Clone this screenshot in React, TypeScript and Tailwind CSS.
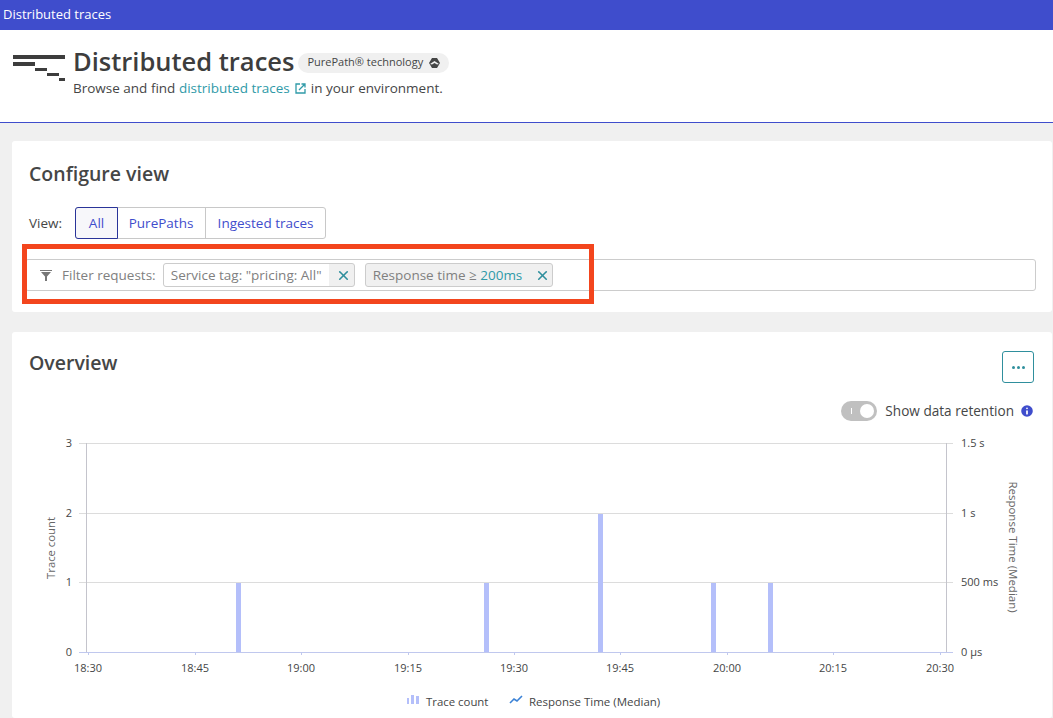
import React from 'react';
import { Info, X } from 'lucide-react';

const font = { fontFamily: '"Open Sans", "Noto Sans", sans-serif' };

const xTicks = [
  { x: 88, label: '18:30' },
  { x: 195, label: '18:45' },
  { x: 301, label: '19:00' },
  { x: 408, label: '19:15' },
  { x: 514, label: '19:30' },
  { x: 620, label: '19:45' },
  { x: 727, label: '20:00' },
  { x: 833, label: '20:15' },
  { x: 940, label: '20:30' },
];

const bars = [
  { x: 236, y: 582 },
  { x: 484, y: 582 },
  { x: 598, y: 513 },
  { x: 711, y: 582 },
  { x: 768, y: 582 },
];

const TraceIcon = () => (
  <svg width="52" height="28" viewBox="0 0 52 28" className="mt-[9px] shrink-0">
    <rect x="0" y="0" width="52" height="4" fill="#3d3d3d" />
    <rect x="0" y="7" width="22" height="4" fill="#3d3d3d" />
    <rect x="22" y="13" width="12" height="3" fill="#3d3d3d" />
    <rect x="34" y="18" width="12" height="3" fill="#3d3d3d" />
    <rect x="46" y="23" width="6" height="3" fill="#3d3d3d" />
  </svg>
);

const Funnel = () => (
  <svg width="12" height="11" viewBox="0 0 12 11">
    <path d="M0 0H12V1H0Z M1 2H11L7 6.5V11H5V6.5Z" fill="#777" />
  </svg>
);

const LinkOut = () => (
  <svg width="11" height="11" viewBox="0 0 11 11" className="mx-[5px]" fill="none" stroke="#2f9aa8">
    <path d="M5 1H1V10H10V6" strokeWidth="1.3" />
    <path d="M4 7L9.5 1.5M6.5 1H10V4.5" strokeWidth="1.3" />
  </svg>
);

const BadgeLogo = () => (
  <svg width="11" height="10" viewBox="0 0 11 10">
    <path d="M3 0H8L11 5L8 10H3L0 5Z" fill="#454646" />
    <path d="M1 6L5.5 3L10 6L8 6.5L5.5 5L3 6.5Z" fill="#f0f0f0" />
  </svg>
);

const Chart = () => (
  <svg width="1041" height="297" viewBox="12 421 1041 297" className="block" fontSize="11" fill="#454646">
    {[443, 513, 582].map((y) => (
      <line key={y} x1="79" x2="953" y1={y + 0.5} y2={y + 0.5} stroke="#dcdcdc" />
    ))}
    <line x1="86.5" x2="86.5" y1="443" y2="652" stroke="#c4c4cc" />
    <line x1="946.5" x2="946.5" y1="443" y2="652" stroke="#c4c4cc" />
    <line x1="79" x2="953" y1="652.5" y2="652.5" stroke="#c0c8ee" />
    {bars.map((b) => (
      <rect key={b.x} x={b.x} y={b.y + 1} width="5" height={652 - b.y - 1} fill="#b4bffa" />
    ))}
    {xTicks.map((t) => (
      <g key={t.label}>
        <line x1={t.x + 0.5} x2={t.x + 0.5} y1="652" y2="655" stroke="#c0c8ee" />
        <text x={t.x} y="672" textAnchor="middle">{t.label}</text>
      </g>
    ))}
    {[
      { y: 443, label: '3' },
      { y: 513, label: '2' },
      { y: 582, label: '1' },
      { y: 652, label: '0' },
    ].map((t) => (
      <text key={t.label} x="72" y={t.y + 4} textAnchor="end">{t.label}</text>
    ))}
    {[
      { y: 443, label: '1.5 s' },
      { y: 513, label: '1 s' },
      { y: 582, label: '500 ms' },
      { y: 652, label: '0 µs' },
    ].map((t) => (
      <text key={t.label} x="961" y={t.y + 4}>{t.label}</text>
    ))}
    <text transform="translate(55 548) rotate(-90)" textAnchor="middle" fill="#666" fontSize="11.3">Trace count</text>
    <text transform="translate(1009 547) rotate(90)" textAnchor="middle" fill="#666" fontSize="11.5">Response Time (Median)</text>
    <rect x="407" y="698" width="2" height="6" fill="#b4bffa" />
    <rect x="411" y="695" width="3" height="9" fill="#b4bffa" />
    <rect x="416" y="696" width="3" height="8" fill="#b4bffa" />
    <text x="426" y="706" fontSize="11.4">Trace count</text>
    <path d="M510 703L514 699L517 701L522 696" fill="none" stroke="#3b82d6" strokeWidth="1.6" />
    <text x="529" y="706" fontSize="11.5">Response Time (Median)</text>
  </svg>
);

export default function App() {
  return (
    <div className="relative h-[718px] w-[1053px] overflow-hidden bg-[#f0f0f0] text-[#454646]" style={font}>
      <div className="flex h-[30px] items-center bg-[#3f4dcc] px-[3px] text-[13px] font-medium text-white">
        Distributed traces
      </div>

      <div className="flex h-[93px] gap-2 border-b border-[#3f4dcc] bg-white pl-[13px] pt-[16px]">
        <TraceIcon />
        <div>
          <div className="flex items-center gap-[4px]">
            <h1 className="text-[25.5px] font-semibold leading-[30px] text-[#3d3d3d]">Distributed traces</h1>
            <span className="mt-[3px] flex h-[20px] items-center gap-[6px] rounded-full bg-[#f0f0f0] px-[9px] text-[11px]">
              PurePath® technology
              <BadgeLogo />
            </span>
          </div>
          <p className="mt-[3px] flex items-center text-[13.5px] leading-[18px]">
            Browse and find&nbsp;
            <span className="text-[#2f9aa8]">distributed traces</span>
            <LinkOut />
            in your environment.
          </p>
        </div>
      </div>

      <div className="ml-3 mr-px mt-[18px] h-[171px] rounded-[3px] bg-white pl-[13px] pr-[16px]">
        <h2 className="pl-1 pt-[20px] text-[19.5px] font-semibold leading-[26px]">Configure view</h2>
        <div className="mt-5 flex items-center gap-[13px] pl-1 text-[13.5px]">
          <span>View:</span>
          <div className="flex h-[32px] rounded-[3px] border border-[#c8c8c8] text-[#3f4dcc]">
            <span className="-m-px flex w-[43px] items-center justify-center rounded-l-[3px] border border-[#2a3499] bg-[#f7f7fa]">All</span>
            <span className="flex w-[89px] items-center justify-center border-r border-[#c8c8c8]">PurePaths</span>
            <span className="flex w-[119px] items-center justify-center">Ingested traces</span>
          </div>
        </div>
        <div className="mt-5 flex h-[32px] items-center rounded-[3px] border border-[#cccccc] pl-[14px] text-[13.5px] text-[#808080]">
          <Funnel />
          <span className="ml-[10px]">Filter requests:</span>
          <div className="ml-[7px] flex h-[24px] w-[192px] items-center rounded-[3px] border border-[#cccccc] bg-[#f0f0f0]">
            <span className="flex h-full w-[165px] items-center justify-center whitespace-nowrap rounded-l-[3px] bg-white">Service tag: "pricing: All"</span>
            <X size={15} strokeWidth={2.6} className="ml-[7px] text-[#2f8f9d]" />
          </div>
          <div className="ml-[10px] flex h-[24px] w-[188px] items-center rounded-[3px] border border-[#cccccc] bg-[#f0f0f0] pl-[7px]">
            <span className="whitespace-nowrap">
              Response time ≥ <span className="text-[#2f9aa8]">200ms</span>
            </span>
            <X size={15} strokeWidth={2.6} className="ml-auto mr-[2px] text-[#2f8f9d]" />
          </div>
        </div>
      </div>

      <div className="ml-3 mr-px mt-5 h-[386px] rounded-[3px] bg-white">
        <div className="flex items-start justify-between pl-[17px] pr-[18px] pt-[19px]">
          <h2 className="-mt-px text-[19.5px] font-semibold leading-[26px]">Overview</h2>
          <button className="flex h-[32px] w-[32px] items-center justify-center gap-[2px] rounded-[3px] border border-[#2f8f9d]">
            <span className="h-[3px] w-[3px] rounded-full bg-[#2f8f9d]" />
            <span className="h-[3px] w-[3px] rounded-full bg-[#2f8f9d]" />
            <span className="h-[3px] w-[3px] rounded-full bg-[#2f8f9d]" />
          </button>
        </div>
        <div className="mt-[18px] flex h-[20px] items-center justify-end pr-[17px] text-[13.6px]">
          <span className="mr-2 flex h-[20px] w-[36px] items-center justify-between rounded-full bg-[#c0c0c0] pl-[10px] pr-[3px]">
            <span className="h-[6px] w-px bg-white" />
            <span className="h-[14px] w-[14px] rounded-full bg-white" />
          </span>
          Show data retention
          <Info size={16} strokeWidth={2.6} className="ml-[5px] fill-[#3f4dcc] text-white" />
        </div>
        <Chart />
      </div>

      <div className="absolute left-[22px] top-[244px] h-[60px] w-[572px] border-[5px] border-[#f3451d]" />
    </div>
  );
}
